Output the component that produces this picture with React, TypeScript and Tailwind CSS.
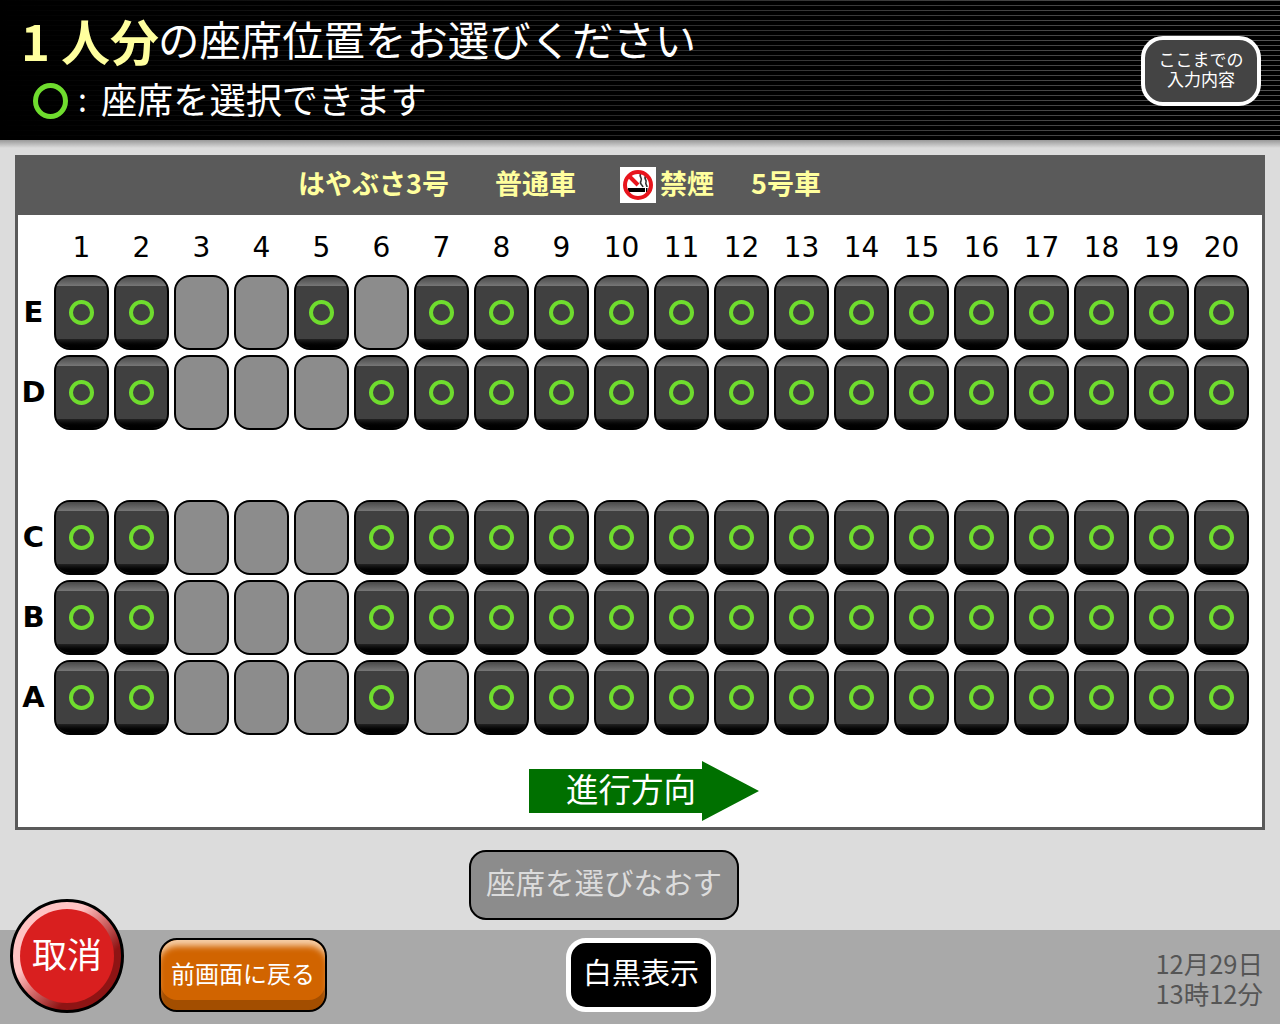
import clsx from "clsx";

const NUMBERS = Array.from({ length: 20 }, (_, i) => i + 1);

// Seat numbers that are taken, per row.
const ROWS: { label: string; taken: number[]; className?: string }[] = [
  { label: "E", taken: [3, 4, 6] },
  { label: "D", taken: [3, 4, 5], className: "mb-[65px]" },
  { label: "C", taken: [3, 4, 5] },
  { label: "B", taken: [3, 4, 5] },
  { label: "A", taken: [3, 4, 5, 7] },
];

function Seat({ taken }: { taken: boolean }) {
  if (taken) {
    return <div className="h-[75px] w-[55px] rounded-[16px] border-2 border-black bg-[#8c8c8c]" />;
  }
  return (
    <button className="relative flex h-[75px] w-[55px] items-center justify-center overflow-hidden rounded-[16px] border-2 border-black bg-[#404040]">
      <span className="absolute inset-x-0 top-0 h-[9px] bg-gradient-to-b from-[#4a4a4a] to-[#777]" />
      <span className="absolute inset-x-0 bottom-0 h-[9px] bg-gradient-to-b from-[#222] to-black" />
      <span className="relative h-[25px] w-[25px] rounded-full border-[4px] border-[#6fdc2e]" />
    </button>
  );
}

function NoSmokingIcon() {
  return (
    <svg width="36" height="36" viewBox="0 0 36 36" className="bg-white">
      <rect x="8" y="21" width="17" height="4" fill="#000" />
      <rect x="26" y="21" width="1.5" height="4" fill="#000" />
      <rect x="28.5" y="21" width="1.5" height="4" fill="#000" />
      <path d="M21 7c-3 2 2 4 0 7s1 3 2 6M26 9c-3 2 1 4 0 6s1 3 1 5" fill="none" stroke="#333" strokeWidth="1.6" />
      <circle cx="18" cy="18" r="13" fill="none" stroke="#e8141c" strokeWidth="4" />
      <path d="M9 9l9 9" stroke="#e8141c" strokeWidth="4" />
    </svg>
  );
}

export default function App() {
  return (
    <div className="relative h-[1024px] w-[1280px] overflow-hidden bg-[#dcdcdc] font-['Noto_Sans_CJK_JP',sans-serif]">
      <header className="flex h-[140px] items-start justify-between bg-black bg-[linear-gradient(to_right,#000_0%,#0000_100%),repeating-linear-gradient(to_bottom,#555_0px,#555_1px,#000_1px,#000_5px)] pl-[21px] pr-[19px]">
        <div>
          <h1 className="mt-[9px] flex h-[60px] items-center font-normal leading-none text-white">
            <span className="text-[49px] font-bold text-[#ffff9e]">1 人分</span>
            <span className="-ml-[1px] text-[41.4px]">の座席位置をお選びください</span>
          </h1>
          <p className="mt-[1px] flex h-[56px] items-center pl-[12px] text-[36.2px] font-normal leading-none text-white">
            <span className="mt-[5px] h-[36px] w-[35px] rounded-[50%] border-[5px] border-[#6fdc2e]" />
            <span className="ml-[10px] mr-[14px] text-[32px]">:</span>
            座席を選択できます
          </p>
        </div>
        <button className="mt-[36px] h-[70px] w-[120px] rounded-[22px] border-4 border-white bg-[#444] pb-[4px] text-[17px] font-normal leading-[20px] text-white">
          ここまでの
          <br />
          入力内容
        </button>
      </header>
      <div className="h-[8px] bg-gradient-to-b from-[#999] to-[#dcdcdc]" />

      <main className="mx-[15px] mt-[7px] h-[675px] border-[3px] border-t-0 border-[#5a5a5a] bg-white">
        <div className="-mx-[3px] flex h-[60px] items-center bg-[#5a5a5a] pb-[5px] pl-[283px] text-[27px] font-bold leading-none text-[#ffff9e]">
          <span className="w-[197px]">はやぶさ3号</span>
          <span className="w-[125px]">普通車</span>
          <span className="mt-[5px] flex"><NoSmokingIcon /></span>
          <span className="ml-[4px] w-[91px]">禁煙</span>
          <span>5号車</span>
        </div>

        <div className="ml-[36px] mt-[15px] flex h-[45px] gap-[5px] font-['DejaVu_Sans',sans-serif] text-[28px] leading-[36px] text-black">
          {NUMBERS.map((n) => (
            <span key={n} className="w-[55px] text-center">
              {n}
            </span>
          ))}
        </div>

        <div className="flex flex-col gap-[5px]">
          {ROWS.map((row) => (
            <div key={row.label} className={clsx("flex h-[75px] items-center", row.className)}>
              <span className="w-[36px] pr-[5px] text-center font-['DejaVu_Sans',sans-serif] text-[29px] font-bold text-black">
                {row.label}
              </span>
              <div className="flex gap-[5px]">
                {NUMBERS.map((n) => (
                  <Seat key={n} taken={row.taken.includes(n)} />
                ))}
              </div>
            </div>
          ))}
        </div>

        <div className="ml-[511px] mt-[26px] flex h-[60px] w-[230px] items-center bg-[#007000] pb-[5px] pl-[37px] text-[32.5px] font-normal leading-none text-white [clip-path:polygon(0_8px,173px_8px,173px_0,100%_30px,173px_100%,173px_52px,0_52px)]">
          進行方向
        </div>
      </main>

      <div className="ml-[469px] mt-[20px] h-[70px] w-[270px]">
        <button className="h-full w-full rounded-[17px] border-2 border-black bg-[#8c8c8c] pb-[6px] text-[29.5px] font-normal leading-none text-[#dcdcdc]">
          座席を選びなおす
        </button>
      </div>

      <footer className="mt-[10px] flex h-[94px] items-start bg-[#a9a9a9] pl-[159px] pr-[17px] pt-[8px]">
        <button className="h-[74px] w-[168px] overflow-hidden rounded-[18px] border-2 border-black bg-[#d16400] pb-[5px] text-[24px] font-normal leading-none text-white shadow-[inset_0_9px_6px_-3px_#f6cfa8,inset_0_-10px_0_0_#a34e00]">
          前画面に戻る
        </button>
        <button className="ml-[239px] h-[74px] w-[150px] rounded-[20px] border-[5px] border-white bg-black pb-[7px] text-[29px] font-normal leading-none text-white">
          白黒表示
        </button>
        <div className="ml-auto mt-[10px] text-right text-[25.5px] font-normal leading-[30px] text-[#555]">
          <div>12月29日</div>
          <div>13時12分</div>
        </div>
      </footer>

      {/* Round cancel button sits over the footer edge */}
      <button className="absolute left-[10px] top-[899px] flex h-[114px] w-[114px] items-center justify-center rounded-full border-[3px] border-black bg-[linear-gradient(135deg,#ffc4c4_0%,#ffc4c4_35%,#d87070_50%,#8e1414_70%,#8e1414_100%)]">
        <span className="flex h-[94px] w-[94px] items-center justify-center rounded-full bg-[#d91f1f] pb-[7px] text-[35px] leading-none text-white">
          取消
        </span>
      </button>
    </div>
  );
}
